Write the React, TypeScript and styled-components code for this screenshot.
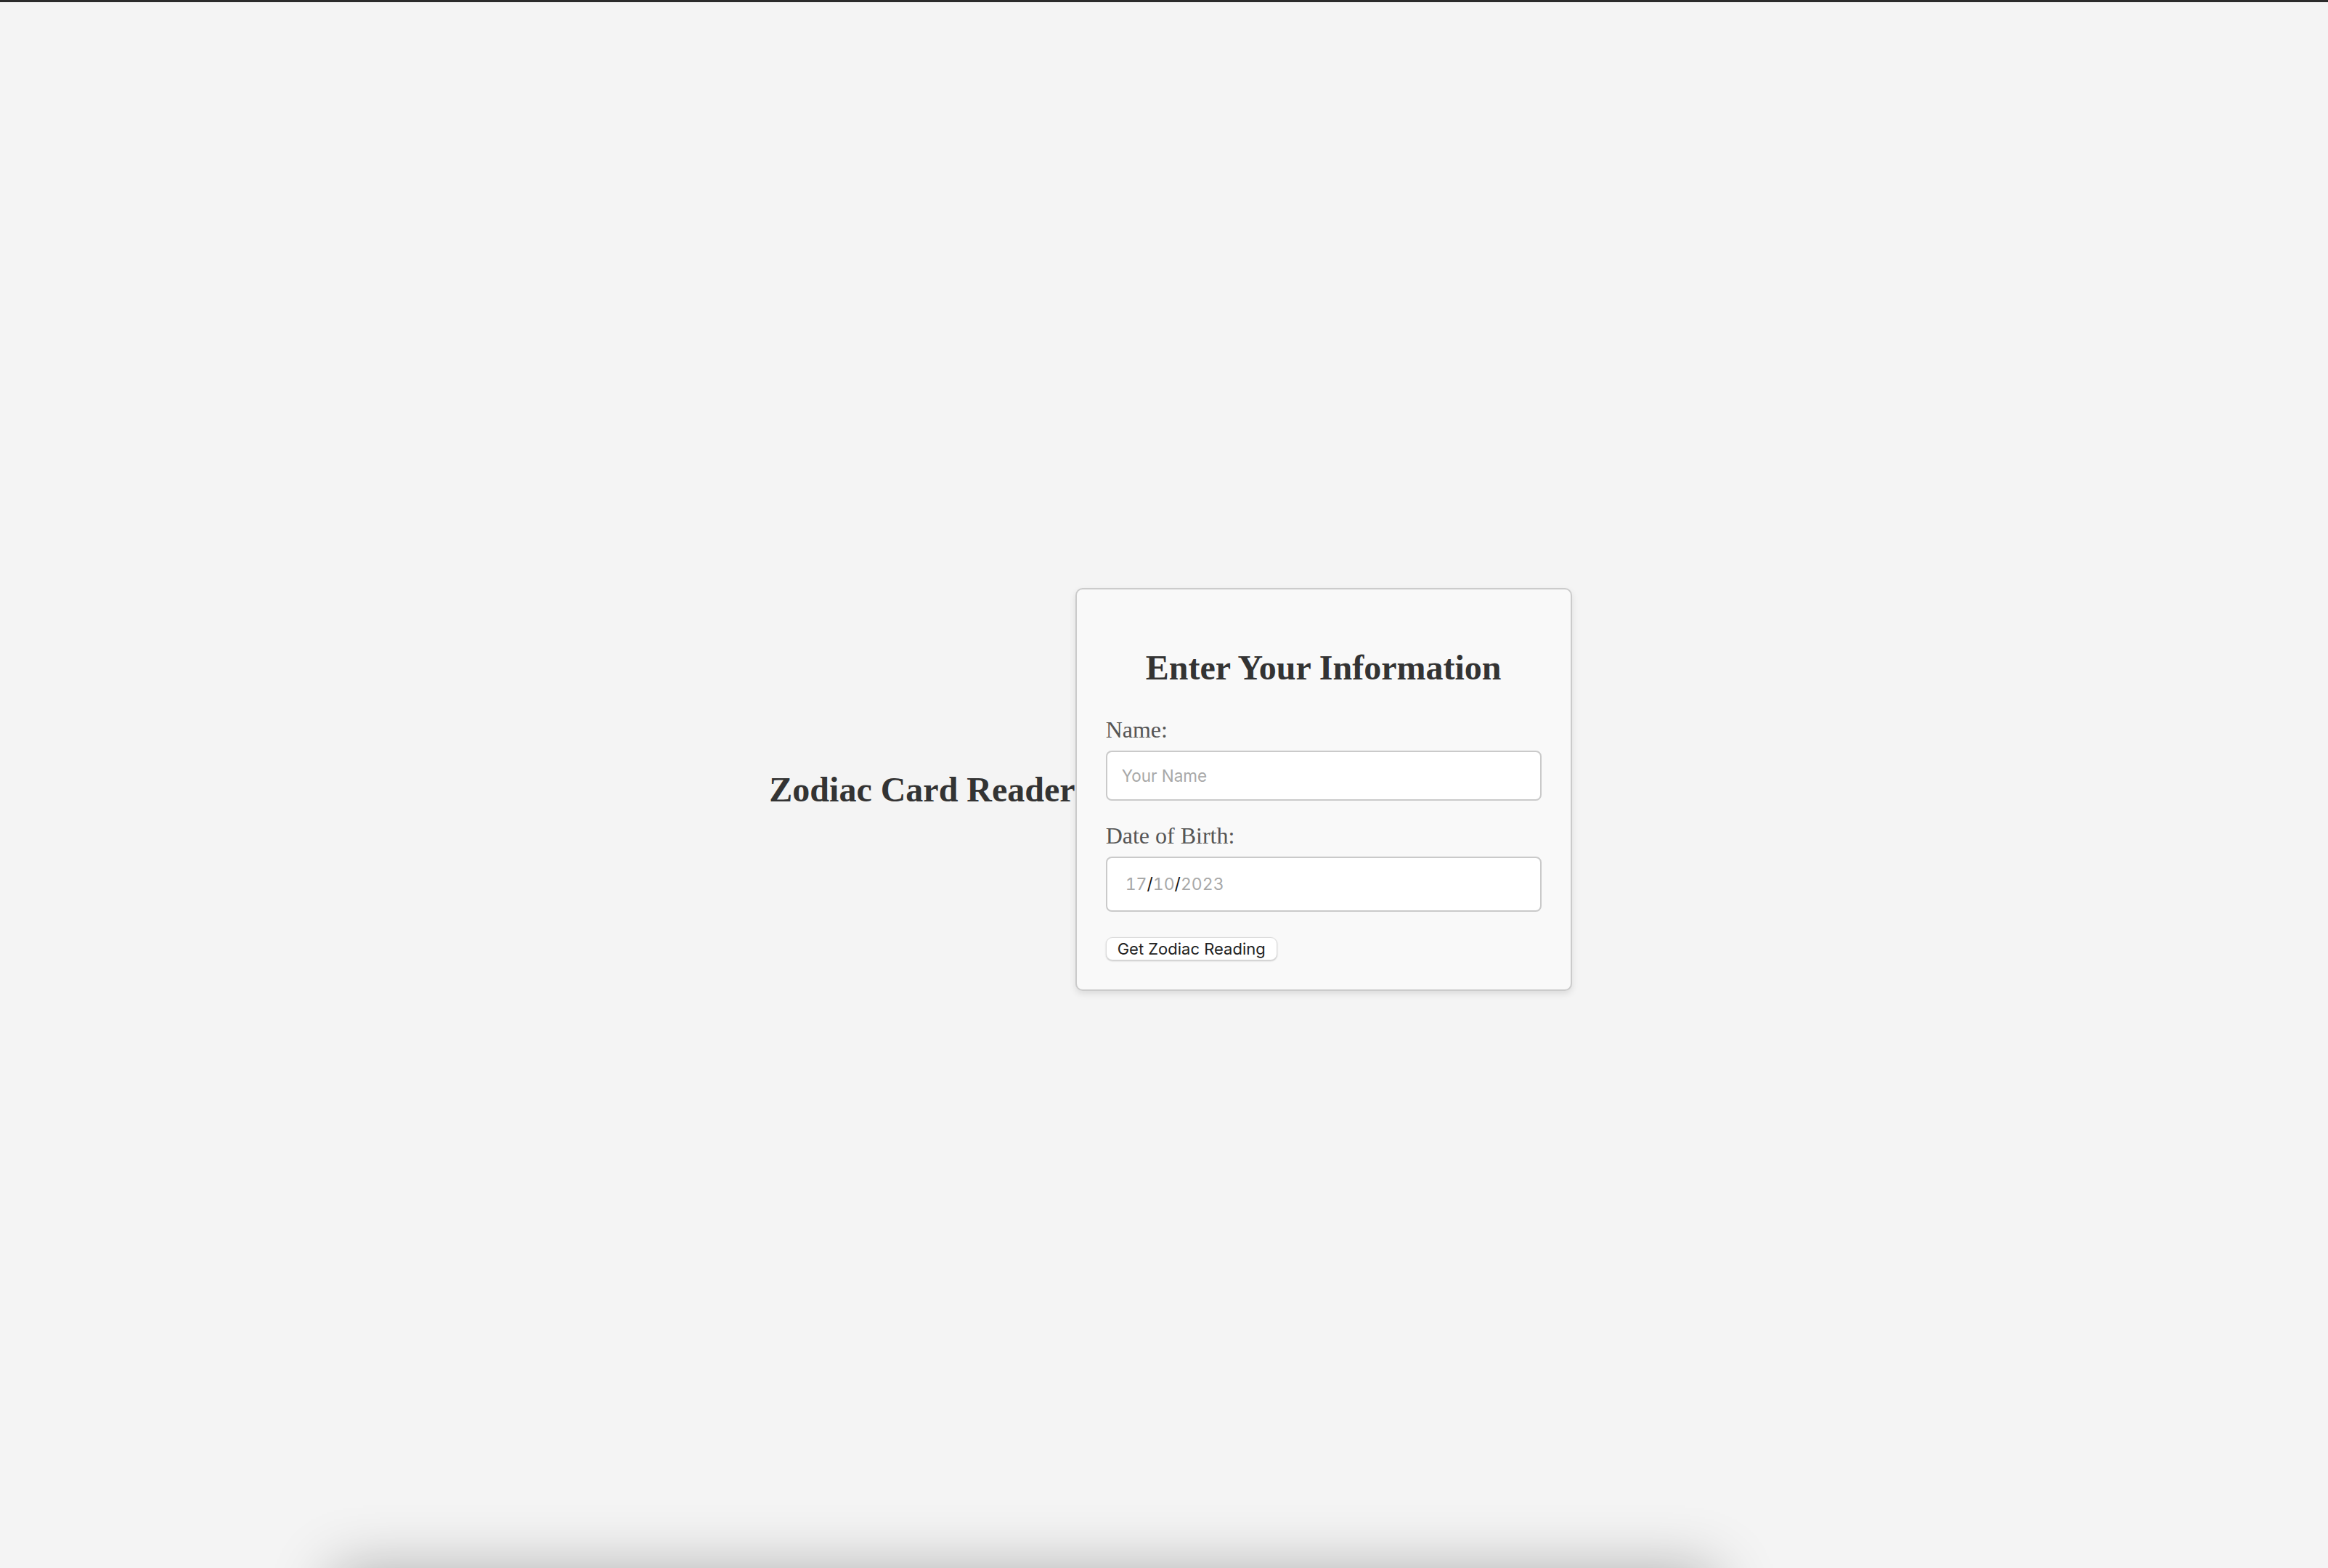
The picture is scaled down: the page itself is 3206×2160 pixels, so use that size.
import React from "react";
import styled, { createGlobalStyle } from "styled-components";

const GlobalStyle = createGlobalStyle`
  html, body {
    margin: 0;
    padding: 0;
    background: #f4f4f4;
  }
  body {
    font-family: "Liberation Serif", "Times New Roman", serif;
    color: #333;
  }
  * { box-sizing: border-box; }
`;

const Viewport = styled.div`
  height: 100vh;
  overflow: hidden;
  display: flex;
  flex-direction: column;
  border-top: 3px solid #2b2b2b;
  background: #f4f4f4;
`;

const Stage = styled.main`
  flex: 0 0 auto;
  height: calc(100vh - 3px);
  padding: 12px 0 0 18px;
  display: flex;
  flex-direction: row;
  justify-content: center;
  align-items: center;
`;

const Title = styled.h1`
  margin: 0;
  font-family: "Liberation Serif", "Times New Roman", serif;
  font-size: 48px;
  line-height: 55px;
  font-weight: 700;
  color: #333;
  white-space: nowrap;
`;

const Card = styled.form`
  width: 684px;
  padding: 40px;
  background: #f9f9f9;
  border: 2px solid #cbcbcb;
  border-radius: 10px;
  box-shadow: 0 4px 10px rgba(0, 0, 0, 0.1);
`;

const CardTitle = styled.h2`
  margin: 40px 0 0;
  font-size: 48px;
  line-height: 55px;
  font-weight: 700;
  color: #333;
  text-align: center;
`;

const Label = styled.label<{ $first?: boolean }>`
  display: block;
  margin: ${(p) => (p.$first ? "40px" : "30px")} 0 10px;
  font-size: 32px;
  line-height: 37px;
  color: #555;
`;

const TextInput = styled.input`
  display: block;
  width: 100%;
  height: 69px;
  padding: 0 20px;
  background: #fff;
  border: 2px solid #cacaca;
  border-radius: 8px;
  font-family: Inter, "Liberation Sans", sans-serif;
  font-size: 22.5px;
  color: #333;
  outline: none;
  &::placeholder { color: #a8a8a8; }
`;

const DateField = styled.div`
  display: flex;
  align-items: center;
  width: 100%;
  height: 76px;
  padding: 0 25px;
  background: #fff;
  border: 2px solid #cacaca;
  border-radius: 8px;
  font-family: Inter, "Liberation Sans", sans-serif;
  font-size: 23px;
  font-variant-numeric: tabular-nums;
`;

const Segment = styled.span`
  color: #a8a8a8;
`;

const Slash = styled.span`
  color: #111;
`;

const SubmitButton = styled.button`
  display: inline-flex;
  align-items: center;
  margin-top: 35px;
  height: 32px;
  padding: 0 15px;
  background: #fff;
  border: 1px solid #dcdcdc;
  border-radius: 9px;
  box-shadow: 0 1px 2px rgba(0, 0, 0, 0.22);
  font-family: Inter, "Liberation Sans", sans-serif;
  font-size: 22px;
  color: #222;
  cursor: pointer;
`;

const ResultPanel = styled.section`
  flex: 0 0 auto;
  width: 1900px;
  height: 400px;
  margin: 4px 0 0 460px;
  background: #f4f4f4;
  box-shadow: 0 0 80px rgba(0, 0, 0, 0.3);
`;

export default function App() {
  return (
    <>
      <GlobalStyle />
      <Viewport>
        <Stage>
          <Title>Zodiac Card Reader</Title>
          <Card onSubmit={(e) => e.preventDefault()}>
            <CardTitle>Enter Your Information</CardTitle>
            <Label $first htmlFor="name">Name:</Label>
            <TextInput id="name" type="text" placeholder="Your Name" />
            <Label htmlFor="dob">Date of Birth:</Label>
            <DateField id="dob">
              <Segment>17</Segment>
              <Slash>/</Slash>
              <Segment>10</Segment>
              <Slash>/</Slash>
              <Segment>2023</Segment>
            </DateField>
            <SubmitButton type="submit">Get Zodiac Reading</SubmitButton>
          </Card>
        </Stage>
        <ResultPanel />
      </Viewport>
    </>
  );
}
